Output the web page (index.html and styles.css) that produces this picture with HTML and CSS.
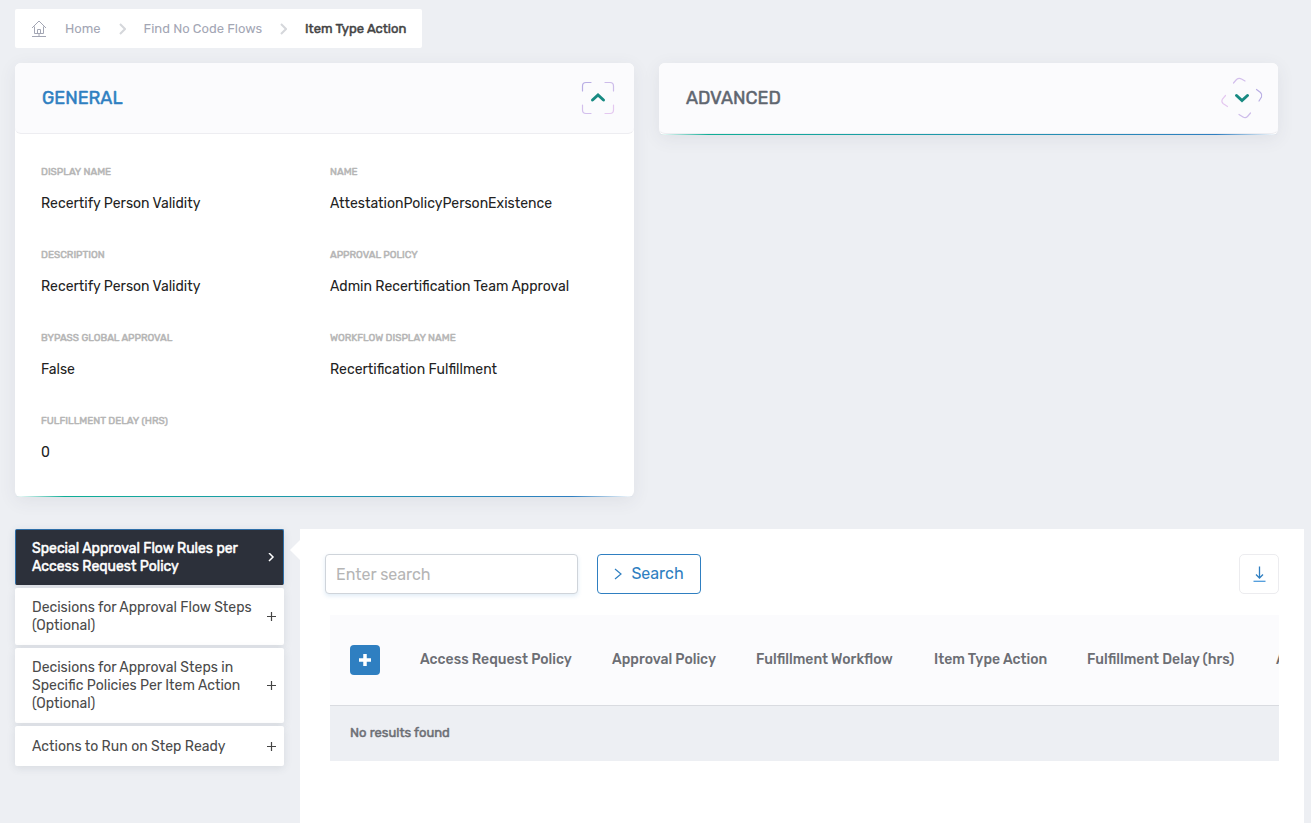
FILE: index.html
```html
<!DOCTYPE html>
<html lang="en">

<head>
  <title>Item Type Action</title>
  <meta charset="UTF-8" />
  <meta name="viewport" content="width=device-width,initial-scale=1" />
  <link rel="stylesheet" href="styles.css">
</head>

<body>
  <nav class="breadcrumb" aria-label="Breadcrumb">
    <svg class="home-icon" width="16" height="18" viewBox="0 0 16 18" fill="none" stroke="#a3a6b4">
      <path d="M1 8 8 1l7 7M3.500 6.500v7h9v-7M6.500 13.500v-4h3v4M8 13.500v3M1 16.500h14" />
    </svg>
    <a href="#">Home</a>
    <svg class="separator" width="7" height="12" viewBox="0 0 7 12" fill="none" stroke="#d5d7db" stroke-width="2">
      <path d="M1 1l5 5-5 5" />
    </svg>
    <a href="#">Find No Code Flows</a>
    <svg class="separator" width="7" height="12" viewBox="0 0 7 12" fill="none" stroke="#d5d7db" stroke-width="2">
      <path d="M1 1l5 5-5 5" />
    </svg>
    <span class="current">Item Type Action</span>
  </nav>

  <div class="cards">
    <section class="card">
      <div class="card-header open">
        <h2>General</h2>
        <button class="toggle" type="button" aria-label="Collapse General" aria-expanded="true">
          <svg width="44" height="44" viewBox="0 0 44 44" fill="none" stroke-linecap="round" stroke-width="1.200">
            <path stroke="#b9aee4" d="M6.500 15v-5q0-3.500 3.500-3.500h5" />
            <path stroke="#cdbcea" d="M29 6.500h5q3.500 0 3.500 3.500v5" />
            <path stroke="#e4c8f0" d="M37.500 29v5q0 3.500-3.500 3.500h-5" />
            <path stroke="#d3bfec" d="M15 37.500h-5q-3.500 0-3.500-3.500v-5" />
            <path stroke="#178a82" stroke-width="3" d="M16.500 24l5.500-5 5.500 5" />
          </svg>
        </button>
      </div>
      <dl class="fields">
        <div class="field">
          <dt>Display Name</dt>
          <dd>Recertify Person Validity</dd>
        </div>
        <div class="field">
          <dt>Name</dt>
          <dd>AttestationPolicyPersonExistence</dd>
        </div>
        <div class="field">
          <dt>Description</dt>
          <dd>Recertify Person Validity</dd>
        </div>
        <div class="field">
          <dt>Approval Policy</dt>
          <dd>Admin Recertification Team Approval</dd>
        </div>
        <div class="field">
          <dt>Bypass Global Approval</dt>
          <dd>False</dd>
        </div>
        <div class="field">
          <dt>Workflow Display Name</dt>
          <dd>Recertification Fulfillment</dd>
        </div>
        <div class="field">
          <dt>Fulfillment Delay (hrs)</dt>
          <dd>0</dd>
        </div>
      </dl>
    </section>

    <section class="card">
      <div class="card-header">
        <h2>Advanced</h2>
        <button class="toggle" type="button" aria-label="Expand Advanced" aria-expanded="false">
          <svg width="44" height="44" viewBox="0 0 44 44" fill="none" stroke-linecap="round" stroke-width="1.200">
            <path stroke="#d3bfec" d="M13.500 7l3-3.500q2.500-2 5-.5l3.500 2" />
            <path stroke="#b9aee4" d="M36.500 13.500l4 3q2 2 1 4.500l-2.500 4" />
            <path stroke="#cdbcea" d="M19 38.500l4 2.500q2.500 1.500 4.500-.5l3-3.500" />
            <path stroke="#e4c8f0" d="M5.500 19.500l-3 3.500q-1.500 2.500.5 4.500l4.500 3" />
            <path stroke="#178a82" stroke-width="3" d="M16.500 19.500l5.500 5 5.500-5" />
          </svg>
        </button>
      </div>
    </section>
  </div>

  <div class="details">
    <nav class="tabs" aria-label="Sections">
      <button class="tab active" type="button">
        <span>Special Approval Flow Rules per Access Request Policy</span>
        <svg width="10" height="10" viewBox="0 0 10 10" fill="none" stroke="#fff" stroke-width="1.500">
          <path d="M3 0l4 4-4 4" />
        </svg>
      </button>
      <button class="tab" type="button">
        <span>Decisions for Approval Flow Steps (Optional)</span>
        <svg width="10" height="10" viewBox="0 0 10 10" stroke="#444" stroke-width="1.200">
          <path d="M1 4.500h9M5.500 0v9" />
        </svg>
      </button>
      <button class="tab" type="button">
        <span>Decisions for Approval Steps in Specific Policies Per Item Action (Optional)</span>
        <svg width="10" height="10" viewBox="0 0 10 10" stroke="#444" stroke-width="1.200">
          <path d="M1 4.500h9M5.500 0v9" />
        </svg>
      </button>
      <button class="tab" type="button">
        <span>Actions to Run on Step Ready</span>
        <svg width="10" height="10" viewBox="0 0 10 10" stroke="#444" stroke-width="1.200">
          <path d="M1 4.500h9M5.500 0v9" />
        </svg>
      </button>
    </nav>

    <main class="content">
      <form class="toolbar">
        <input class="search-input" type="text" placeholder="Enter search" aria-label="Search" />
        <button class="search-button" type="button">
          <svg width="8" height="12" viewBox="0 0 8 12" fill="none" stroke="#2f7fc1" stroke-width="1.200">
            <path d="M1 1l6 5-6 5" />
          </svg>
          Search
        </button>
        <button class="download" type="button" aria-label="Download">
          <svg width="14" height="16" viewBox="0 0 14 16" fill="none" stroke="#2f7fc1" stroke-width="1.300">
            <path d="M7.500 .5V12M4 8.500 7.500 12 11 8.500" />
            <path stroke="#4f9bdc" d="M1.500 15.300h12" />
          </svg>
        </button>
      </form>

      <div class="table-wrapper">
        <table>
          <colgroup>
            <col class="col-add">
            <col class="col-request">
            <col class="col-approval">
            <col class="col-workflow">
            <col class="col-type">
            <col class="col-delay">
            <col class="col-actions">
          </colgroup>
          <thead>
            <tr>
              <th>
                <button class="add" type="button" aria-label="Add">
                  <svg width="12" height="12" viewBox="0 0 12 12" stroke="#fff" stroke-width="3.500">
                    <path d="M0 6h12M6 0v12" />
                  </svg>
                </button>
              </th>
              <th>Access Request Policy</th>
              <th>Approval Policy</th>
              <th>Fulfillment Workflow</th>
              <th>Item Type Action</th>
              <th>Fulfillment Delay (hrs)</th>
              <th>Actions</th>
            </tr>
          </thead>
          <tbody>
            <tr>
              <td colspan="7">No results found</td>
            </tr>
          </tbody>
        </table>
      </div>
    </main>
  </div>
</body>

</html>
```
FILE: styles.css
```css
* {
  box-sizing: border-box;
}

body {
  margin: 0;
  padding: 9px 7px 0 15px;
  min-height: 100vh;
  display: flex;
  flex-direction: column;
  background: #edeff3;
  color: #222;
  font-family: Rubik, Roboto, "Liberation Sans", sans-serif;
  font-size: 14px;
  line-height: 18px;
}

button,
input {
  font: inherit;
}

button {
  padding: 0;
  cursor: pointer;
}

svg {
  display: block;
  flex: none;
}

/* Heavier text that keeps the regular width */
.current,
.card-header h2,
.field dt,
.tab.active span,
td {
  font-weight: 400;
  -webkit-text-stroke: 0.5px currentColor;
}

/* Breadcrumb */
.breadcrumb {
  align-self: flex-start;
  display: flex;
  align-items: center;
  height: 39px;
  padding: 0 16px;
  background: #fff;
  border-radius: 2px;
  font-size: 13px;
}

.breadcrumb a {
  color: #a3a6b4;
  text-decoration: none;
}

.home-icon {
  margin-right: 18px;
}

.separator {
  margin: 0 18px;
}

.current {
  color: #444;
}

/* Cards */
.cards {
  display: grid;
  grid-template-columns: 1fr 1fr;
  gap: 25px;
  align-items: start;
  margin: 15px 26px 0 0;
}

.card {
  position: relative;
  padding-bottom: 1px;
  background: #fff;
  border-radius: 6px;
  box-shadow: 0 4px 18px rgba(60, 70, 90, .08);
}

.card::after {
  content: "";
  position: absolute;
  left: 0;
  right: 0;
  bottom: 0;
  height: 1px;
  background: linear-gradient(90deg, transparent, #0fae96 8%, #2f7fc1 90%, transparent);
}

.card-header {
  display: flex;
  align-items: center;
  justify-content: space-between;
  height: 71px;
  padding: 0 14px 0 27px;
  background: #fbfbfd;
  border-bottom: 1px solid #ededf1;
  border-radius: 6px;
}

.card-header h2 {
  margin: 0;
  color: #5f6670;
  font-size: 18px;
  text-transform: uppercase;
}

.card-header.open h2 {
  color: #2f7fc1;
}

.toggle {
  border: 0;
  background: none;
}

.fields {
  display: grid;
  grid-template-columns: 1fr 1fr;
  row-gap: 31px;
  margin: 0;
  padding: 29px 15px 32px 26px;
}

.field dt {
  color: #b5b5b5;
  font-size: 10px;
  text-transform: uppercase;
}

.field dd {
  margin: 12px 0 0;
  line-height: 22px;
}

/* Side tabs */
.details {
  flex: 1;
  display: flex;
  gap: 16px;
  margin-top: 32px;
}

.tabs {
  flex: none;
  width: 269px;
  display: flex;
  flex-direction: column;
  gap: 3px;
}

.tab {
  display: flex;
  align-items: center;
  justify-content: space-between;
  gap: 12px;
  min-height: 40px;
  padding: 11px 8px 10px 17px;
  border: 0;
  border-radius: 2px;
  background: #fff;
  box-shadow: 0 2px 8px rgba(60, 70, 90, .12);
  color: #4a4a4a;
  text-align: left;
}

.tab.active {
  padding: 10px 7px 8px 16px;
  border: 1px solid #2f6fa8;
  border-bottom-color: #2c303a;
  background: #2c303a;
  color: #fff;
}

/* Main panel */
.content {
  position: relative;
  flex: 1;
  min-width: 0;
  padding: 25px;
  background: #fff;
}

.content::before {
  content: "";
  position: absolute;
  top: 11px;
  left: -10px;
  border: 10px solid transparent;
  border-left: 0;
  border-right-color: #fff;
}

.toolbar {
  display: flex;
  align-items: center;
}

.search-input {
  width: 253px;
  height: 40px;
  padding: 0 10px;
  border: 1px solid #cfd4da;
  border-radius: 4px;
  box-shadow: 0 2px 4px rgba(47, 127, 193, .15);
  font-size: 16px;
}

.search-input::placeholder {
  color: #b5b5b5;
}

.search-button {
  display: flex;
  align-items: center;
  justify-content: center;
  gap: 9px;
  width: 104px;
  height: 40px;
  margin-left: 19px;
  border: 1px solid #2f7fc1;
  border-radius: 4px;
  background: #fff;
  color: #2f7fc1;
  font-size: 16px;
}

.download {
  display: flex;
  align-items: center;
  justify-content: center;
  width: 40px;
  height: 40px;
  margin-left: auto;
  border: 1px solid #ececef;
  border-radius: 5px;
  background: #fff;
}

.table-wrapper {
  margin: 21px 0 0 5px;
  overflow: hidden;
}

table {
  width: 1046px;
  table-layout: fixed;
  border-collapse: collapse;
  color: #6c6e74;
  white-space: nowrap;
}

th,
td {
  padding: 0 20px;
  text-align: left;
}

th {
  height: 90px;
  background: #fbfbfd;
  border-bottom: 1px solid #d9dbe0;
  font-weight: 500;
}

td {
  height: 56px;
  background: #edeff3;
  font-size: 13px;
}

.col-add {
  width: 70px;
}

.col-request {
  width: 192px;
}

.col-approval {
  width: 144px;
}

.col-workflow {
  width: 178px;
}

.col-type {
  width: 153px;
}

.col-delay {
  width: 189px;
}

.col-actions {
  width: 120px;
}

.add {
  display: flex;
  align-items: center;
  justify-content: center;
  width: 30px;
  height: 30px;
  border: 0;
  border-radius: 4px;
  background: #2f7fc1;
}
```
